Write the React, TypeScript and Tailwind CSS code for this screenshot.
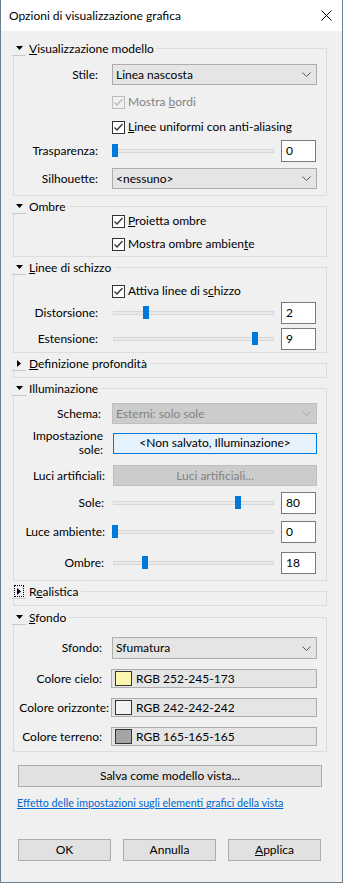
import React from "react";

const Down = () => (
  <svg width="7" height="4" viewBox="0 0 7 4">
    <polygon points="0,0 7,0 3.5,4" fill="#000" />
  </svg>
);

const Right = () => (
  <svg width="4" height="7" viewBox="0 0 4 7">
    <polygon points="0,0 4,3.5 0,7" fill="#000" />
  </svg>
);

const Chevron = ({ color = "#555" }: { color?: string }) => (
  <svg width="9" height="5" viewBox="0 0 9 5">
    <polyline points="0.5,0.5 4.5,4.5 8.5,0.5" fill="none" stroke={color} strokeWidth="1" />
  </svg>
);

const Check = ({ color }: { color: string }) => (
  <svg width="11" height="11" viewBox="0 0 11 11">
    <polyline points="1.5,5.5 4,8 9.5,2" fill="none" stroke={color} strokeWidth="1.3" />
  </svg>
);

interface GroupProps {
  title: React.ReactNode;
  open?: boolean;
  focus?: boolean;
  className?: string;
  bodyClass?: string;
  children?: React.ReactNode;
}

const Group = ({ title, open = true, focus, className = "", bodyClass = "", children }: GroupProps) => (
  <div className={className}>
    <div className="flex h-[15px]">
      <div className="w-[14px] h-[15px] -ml-px border-b border-[#c9c9c9] flex items-center justify-center">
        {focus ? (
          <div className="w-[10px] h-[12px] border border-dotted border-black flex items-center justify-center">
            <Right />
          </div>
        ) : open ? (
          <Down />
        ) : (
          <Right />
        )}
      </div>
      <span className="pl-[3px] pr-[3px] leading-[15px]">{title}</span>
      <div className="flex-1 mt-[7px] border-t border-r border-[#dcdcdc]" />
    </div>
    <div className={`border-l border-r border-b border-[#dcdcdc] ${bodyClass}`}>{children}</div>
  </div>
);

const Row = ({ label, pr, className = "", children }: { label: React.ReactNode; pr: string; className?: string; children: React.ReactNode }) => (
  <div className={`flex items-center ${className}`}>
    <div className={`w-[98px] shrink-0 text-right whitespace-nowrap ${pr}`}>{label}</div>
    {children}
  </div>
);

const Select = ({ value, disabled, h = "h-[21px]" }: { value: string; disabled?: boolean; h?: string }) => (
  <div
    className={`w-[205px] ${h} border flex items-center pl-[3px] pr-[5px] ${
      disabled ? "bg-[#cccccc] border-[#bfbfbf] text-[#838383]" : "bg-[#e5e5e5] border-[#adadad]"
    }`}
  >
    <span className="flex-1">{value}</span>
    <Chevron color={disabled ? "#a6a6a6" : "#555"} />
  </div>
);

const Slider = ({ thumb, value }: { thumb: number; value: string }) => (
  <div className="flex items-center">
    <div className="relative flex items-center w-[164px] h-[22px]">
      <div className="ml-[1px] w-[161px] h-[4px] bg-[#e7eaea] border border-[#d6d6d6]" />
      <div className="absolute top-[4px] w-[6px] h-[13px] bg-[#0078d7]" style={{ left: thumb }} />
    </div>
    <div className="ml-[5px] w-[35px] h-[22px] bg-white border border-[#7a7a7a] pl-[4px] flex items-center">{value}</div>
  </div>
);

const CheckRow = ({ label, disabled, className = "" }: { label: React.ReactNode; disabled?: boolean; className?: string }) => (
  <div className={`flex items-center h-[14px] pl-[98px] ${className}`}>
    <div
      className={`w-[13px] h-[13px] border flex items-center justify-center ${
        disabled ? "border-[#bcbcbc] bg-[#f0f0f0]" : "border-[#333333] bg-white"
      }`}
    >
      <Check color={disabled ? "#bcbcbc" : "#333333"} />
    </div>
    <span className={`ml-[3px] ${disabled ? "text-[#838383]" : ""}`}>{label}</span>
  </div>
);

const ColorField = ({ swatch, text }: { swatch: string; text: string }) => (
  <div className="-ml-px w-[206px] h-[19px] bg-[#e5e5e5] border border-[#adadad] flex items-center pl-[3px]">
    <div className={`w-[17px] h-[15px] border border-[#333333] ${swatch}`} />
    <span className="ml-[4px]">{text}</span>
  </div>
);

const Btn = ({ children, className = "" }: { children: React.ReactNode; className?: string }) => (
  <div className={`h-[22px] bg-[#e1e1e1] border border-[#adadad] flex items-center justify-center ${className}`}>{children}</div>
);

export default function App() {
  return (
    <div className="w-[343px] h-[883px] bg-[#f0f0f0] border-l border-r border-b border-[#6b7f8c] flex flex-col text-[12px] leading-[14px] text-black font-[Lato,'Liberation_Sans',sans-serif]">
      {/* title bar */}
      <div className="h-[31px] bg-white flex items-center pl-[8px] pr-[10px] shrink-0">
        <span className="flex-1 text-[12px]">Opzioni di visualizzazione grafica</span>
        <svg width="11" height="11" viewBox="0 0 11 11">
          <path d="M0.5 0.5 L10.5 10.5 M10.5 0.5 L0.5 10.5" stroke="#000" strokeWidth="1" />
        </svg>
      </div>

      <div className="pl-[12px] pr-[15px] pt-[10px] flex flex-col">
        <Group
          title={<><span className="underline">V</span>isualizzazione modello</>}
          bodyClass="pt-[8px] pb-[6px]"
        >
          <Row label="Stile:" pr="pr-[14px]">
            <Select value="Linea nascosta" />
          </Row>
          <CheckRow className="mt-[10px]" disabled label={<>Mostra <span className="underline">b</span>ordi</>} />
          <CheckRow className="mt-[11px]" label={<><span className="underline">L</span>inee uniformi con anti-aliasing</>} />
          <Row label="Trasparenza:" pr="pr-[14px]" className="mt-[6px]">
            <Slider thumb={0} value="0" />
          </Row>
          <Row label="Silhouette:" pr="pr-[14px]" className="mt-[6px]">
            <Select value="<nessuno>" />
          </Row>
        </Group>

        <Group title="Ombre" className="mt-[3px]" bodyClass="pb-[5px]">
          <CheckRow label={<><span className="underline">P</span>roietta ombre</>} />
          <CheckRow className="mt-[9px]" label={<>Mostra ombre ambien<span className="underline">t</span>e</>} />
        </Group>

        <Group title={<><span className="underline">L</span>inee di schizzo</>} className="mt-[3px]" bodyClass="pt-[9px] pb-[2px]">
          <CheckRow label={<>Attiva linee di s<span className="underline">c</span>hizzo</>} />
          <Row label="Distorsione:" pr="pr-[14px]" className="mt-[4px]">
            <Slider thumb={31} value="2" />
          </Row>
          <Row label="Estensione:" pr="pr-[14px]" className="mt-[4px]">
            <Slider thumb={140} value="9" />
          </Row>
        </Group>

        <Group title={<><span className="underline">D</span>efinizione profondità</>} open={false} className="mt-[3px]" bodyClass="h-[7px]" />

        <Group title={<>Illuminazione</>} className="mt-[3px]" bodyClass="pt-[7px] pb-[6px]">
          <Row label="Schema:" pr="pr-[11px]">
            <Select value="Esterni: solo sole" disabled />
          </Row>
          <Row label={<><div>Impostazione</div><div>sole:</div></>} pr="pr-[9px] leading-[14px]" className="mt-[5px] h-[28px]">
            <div className="ml-px w-[204px] h-[21px] bg-[#e5f1fb] border border-[#0078d7] flex items-center justify-center">
              &lt;Non salvato, Illuminazione&gt;
            </div>
          </Row>
          <Row label="Luci artificiali:" pr="pr-[7px]" className="mt-[8px]">
            <div className="ml-px w-[204px] h-[21px] bg-[#cccccc] border border-[#bfbfbf] text-[#838383] flex items-center justify-center">
              Luci artificiali...
            </div>
          </Row>
          <Row label="Sole:" pr="pr-[8px]" className="mt-[6px]">
            <Slider thumb={123} value="80" />
          </Row>
          <Row label="Luce ambiente:" pr="pr-[7px]" className="mt-[7px]">
            <Slider thumb={0} value="0" />
          </Row>
          <Row label="Ombre:" pr="pr-[8px]" className="mt-[9px]">
            <Slider thumb={30} value="18" />
          </Row>
        </Group>

        <Group title={<>R<span className="underline">e</span>alistica</>} open={false} focus className="mt-[3px]" bodyClass="h-[7px]" />

        <Group title={<><span className="underline">S</span>fondo</>} className="mt-[4px]" bodyClass="pt-[12px] pb-[5px]">
          <Row label="Sfondo:" pr="pr-[10px]">
            <Select value="Sfumatura" h="h-[22px]" />
          </Row>
          <Row label="Colore cielo:" pr="pr-[10px]" className="mt-[10px]">
            <ColorField swatch="bg-[#fcf5ad]" text="RGB 252-245-173" />
          </Row>
          <Row label="Colore orizzonte:" pr="pr-[3px]" className="mt-[10px]">
            <ColorField swatch="bg-[#f2f2f2]" text="RGB 242-242-242" />
          </Row>
          <Row label="Colore terreno:" pr="pr-[10px]" className="mt-[10px]">
            <ColorField swatch="bg-[#a5a5a5]" text="RGB 165-165-165" />
          </Row>
        </Group>

        <Btn className="mt-[13px] ml-[5px] w-[304px] h-[21px]">Salva come modello vista...</Btn>

        <div className="mt-[9px] ml-[4px] text-[10.7px] text-[#0066cc] underline">
          Effetto delle impostazioni sugli elementi grafici della vista
        </div>

        <div className="mt-[29px] ml-[5px] flex gap-[12px]">
          <Btn className="w-[93px]">OK</Btn>
          <Btn className="w-[93px]">Annulla</Btn>
          <Btn className="w-[93px]">
            <span className="underline">A</span>pplica
          </Btn>
        </div>
      </div>
    </div>
  );
}
